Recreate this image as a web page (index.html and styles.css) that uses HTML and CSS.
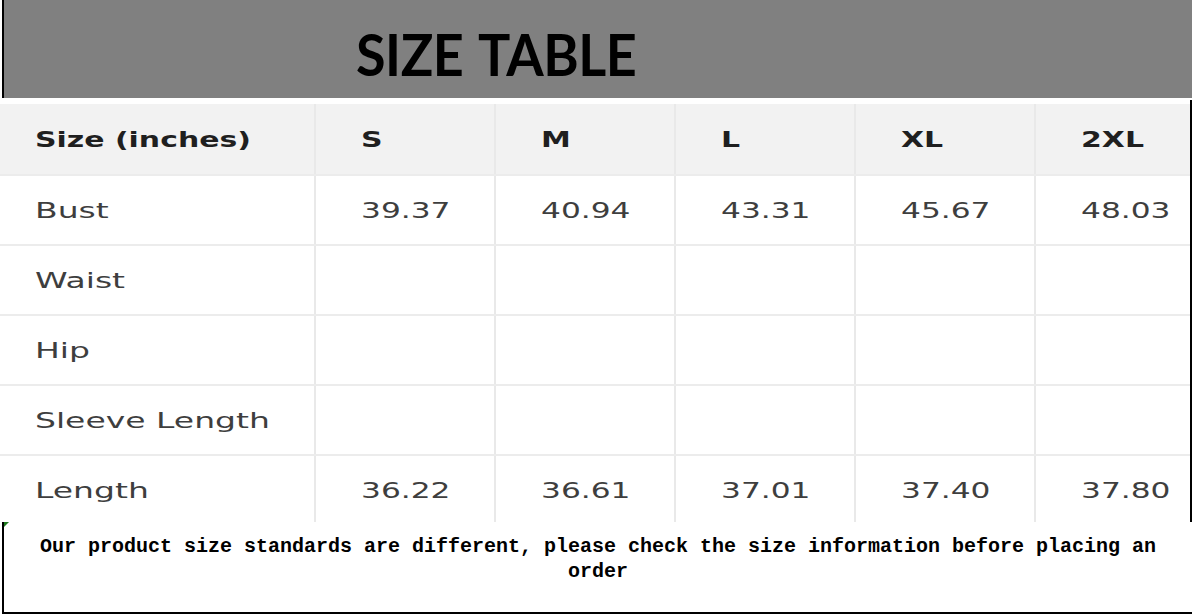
FILE: index.html
```html
<!DOCTYPE html>
<html>
<head>
<meta charset="utf-8">
<link rel="stylesheet" href="styles.css">
</head>
<body>
<div class="sheet">
  <header class="banner"><h1 class="title">SIZE TABLE</h1></header>
  <div class="table-wrap">
    <table class="size-table">
      <colgroup>
        <col class="c-first"><col class="c-size"><col class="c-size"><col class="c-size"><col class="c-size"><col class="c-last">
      </colgroup>
      <thead>
        <tr>
          <th class="first"><span class="wide">Size (inches)</span></th>
          <th><span class="wide">S</span></th>
          <th><span class="wide">M</span></th>
          <th><span class="wide">L</span></th>
          <th><span class="wide">XL</span></th>
          <th><span class="wide">2XL</span></th>
        </tr>
      </thead>
      <tbody>
        <tr>
          <td class="first"><span class="wide">Bust</span></td>
          <td><span class="wide">39.37</span></td>
          <td><span class="wide">40.94</span></td>
          <td><span class="wide">43.31</span></td>
          <td><span class="wide">45.67</span></td>
          <td><span class="wide">48.03</span></td>
        </tr>
        <tr>
          <td class="first"><span class="wide">Waist</span></td>
          <td></td><td></td><td></td><td></td><td></td>
        </tr>
        <tr>
          <td class="first"><span class="wide">Hip</span></td>
          <td></td><td></td><td></td><td></td><td></td>
        </tr>
        <tr>
          <td class="first"><span class="wide">Sleeve Length</span></td>
          <td></td><td></td><td></td><td></td><td></td>
        </tr>
        <tr>
          <td class="first"><span class="wide">Length</span></td>
          <td><span class="wide">36.22</span></td>
          <td><span class="wide">36.61</span></td>
          <td><span class="wide">37.01</span></td>
          <td><span class="wide">37.40</span></td>
          <td><span class="wide">37.80</span></td>
        </tr>
      </tbody>
    </table>
  </div>
  <div class="note">
    <span class="marker"></span>
    <p class="note-text">Our product size standards are different, please check the size information before placing an order</p>
  </div>
</div>
</body>
</html>
```

FILE: styles.css
```css
html, body {
  margin: 0;
  padding: 0;
  background: #ffffff;
}

.sheet {
  width: 1192px;
}

.banner {
  height: 98px;
  margin-left: 2px;
  border-left: 2px solid #000;
  background: #808080;
  display: flex;
  align-items: center;
  padding-left: 352px;
  box-sizing: border-box;
}

.title {
  margin: 0;
  font-family: Lato, "Noto Sans", sans-serif;
  font-weight: 700;
  font-size: 58px;
  line-height: 1;
  color: #000;
  letter-spacing: -0.5px;
  word-spacing: 4px;
  padding-top: 10px;
  transform: scaleX(0.93);
  transform-origin: left center;
}

.table-wrap {
  height: 422px;
  overflow: hidden;
  padding-top: 4px;
  box-sizing: border-box;
  border-right: 2px solid #000;
  margin-top: 2px;
}

.size-table {
  border-collapse: collapse;
  table-layout: fixed;
  width: 1190px;
}

.c-first { width: 315px; }
.c-size { width: 180px; }
.c-last { width: 155px; }

.size-table th,
.size-table td {
  height: 70px;
  padding: 0 0 0 45px;
  text-align: left;
  vertical-align: middle;
  border-right: 2px solid #e9e9e9;
  border-bottom: 2px solid #ececec;
  font-family: "DejaVu Sans", sans-serif;
  font-size: 22px;
  white-space: nowrap;
  box-sizing: border-box;
}

.size-table th:last-child,
.size-table td:last-child {
  border-right: none;
}

.size-table th {
  height: 71px;
  background: #f2f2f2;
  font-weight: 700;
  color: #1f1f1f;
}

.size-table td {
  font-weight: 400;
  color: #3e3e3e;
}

.size-table .first {
  padding-left: 35px;
}

.wide {
  display: inline-block;
  transform: scaleX(1.42);
  transform-origin: left center;
}

td.first .wide {
  transform: scaleX(1.5);
}

th .wide {
  transform: scaleX(1.36);
}

.note {
  position: relative;
  height: 92px;
  margin-left: 2px;
  border-left: 2px solid #000;
  border-bottom: 2px solid #000;
  box-sizing: border-box;
  padding-top: 12px;
}

.marker {
  position: absolute;
  left: 0;
  top: 0;
  width: 0;
  height: 0;
  border-top: 5px solid #1f7a1f;
  border-right: 5px solid transparent;
}

.note-text {
  margin: 0;
  text-align: center;
  font-family: "Liberation Mono", monospace;
  font-weight: 700;
  font-size: 20px;
  line-height: 25px;
  color: #000;
  padding: 0 30px;
}
```
